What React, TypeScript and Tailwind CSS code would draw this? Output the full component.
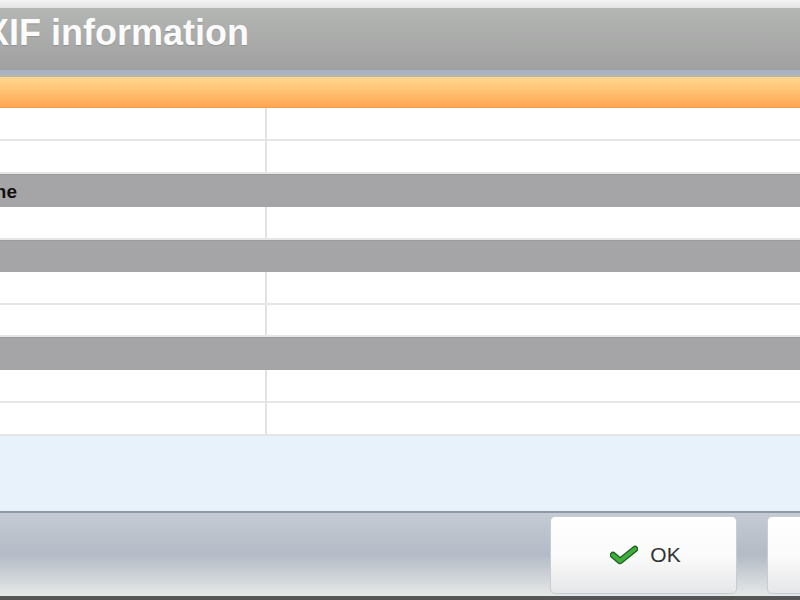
import React from "react";

const font = { fontFamily: '"Liberation Sans", Arial, sans-serif' };

function DataRow({ h }: { h: string }) {
  return (
    <div className={`flex ${h} bg-white border-b-2 border-[#e6e6e6]`}>
      <div className="w-[267px] shrink-0 border-r-2 border-[#e3e3e3]" />
      <div className="flex-1" />
    </div>
  );
}

function Section({ h, label }: { h: string; label?: string }) {
  return (
    <div className={`flex items-center ${h} bg-[#a5a5a7] border-t border-[#9a9a9c]`}>
      {label ? (
        <div className="w-[17px] overflow-hidden flex justify-end">
          <span className="whitespace-nowrap text-[19px] font-bold text-[#111] leading-none">{label}</span>
        </div>
      ) : null}
    </div>
  );
}

function Check() {
  return (
    <svg width="28" height="20" viewBox="0 0 28 20">
      <path d="M3 10 L10 16 L25 4" fill="none" stroke="#1d5e1d" strokeWidth="6.5" strokeLinecap="round" strokeLinejoin="round" />
      <path d="M3 10 L10 16 L25 4" fill="none" stroke="#3fae3c" strokeWidth="4" strokeLinecap="round" strokeLinejoin="round" />
    </svg>
  );
}

function Button({ children }: { children?: React.ReactNode }) {
  return (
    <div className="w-[187px] h-[78px] shrink-0 rounded-[5px] border border-[#c9cdd2] bg-gradient-to-b from-white via-[#fbfbfb] to-[#e6e7e8] flex items-center justify-center gap-[12px] pl-[4px]">
      {children}
    </div>
  );
}

export default function App() {
  return (
    <div className="w-[800px] h-[600px] overflow-hidden flex flex-col bg-white" style={font}>
      <div className="h-[8px] bg-gradient-to-b from-[#f4f4f4] to-[#e4e4e4]" />
      <div className="h-[62px] bg-gradient-to-b from-[#b4b6b4] to-[#a0a1a0] overflow-hidden flex items-start pt-[7px]">
        <span className="-ml-[39px] whitespace-nowrap text-[36px] font-bold text-[#fbfbfb] leading-none" style={{ textShadow: "0 1px 1px rgba(0,0,0,0.15)" }}>
          EXIF information
        </span>
      </div>
      <div className="h-[4px] bg-[#a9b3c6]" />
      <div className="h-[3px] bg-[#b5b5b5]" />
      <div className="h-[31px] bg-gradient-to-b from-[#ffd890] to-[#ffa650] border-b border-[#f39d4a]" />
      <DataRow h="h-[33px]" />
      <DataRow h="h-[33px]" />
      <Section h="h-[33px]" label="Scene" />
      <DataRow h="h-[33px]" />
      <Section h="h-[32px]" />
      <DataRow h="h-[33px]" />
      <DataRow h="h-[32px]" />
      <Section h="h-[33px]" />
      <DataRow h="h-[33px]" />
      <DataRow h="h-[33px]" />
      <div className="h-[75px] bg-[#e8f2fb]" />
      <div className="h-[85px] border-t-2 border-[#8e99a8] bg-gradient-to-b from-[#c4cbd4] via-[#b4bbc6] to-[#e6e9e8] flex items-center gap-[30px] pl-[550px] overflow-hidden">
        <Button>
          <Check />
          <span className="text-[21px] text-[#333] leading-none">OK</span>
        </Button>
        <Button />
      </div>
      <div className="flex-1 bg-[#565656]" />
    </div>
  );
}
